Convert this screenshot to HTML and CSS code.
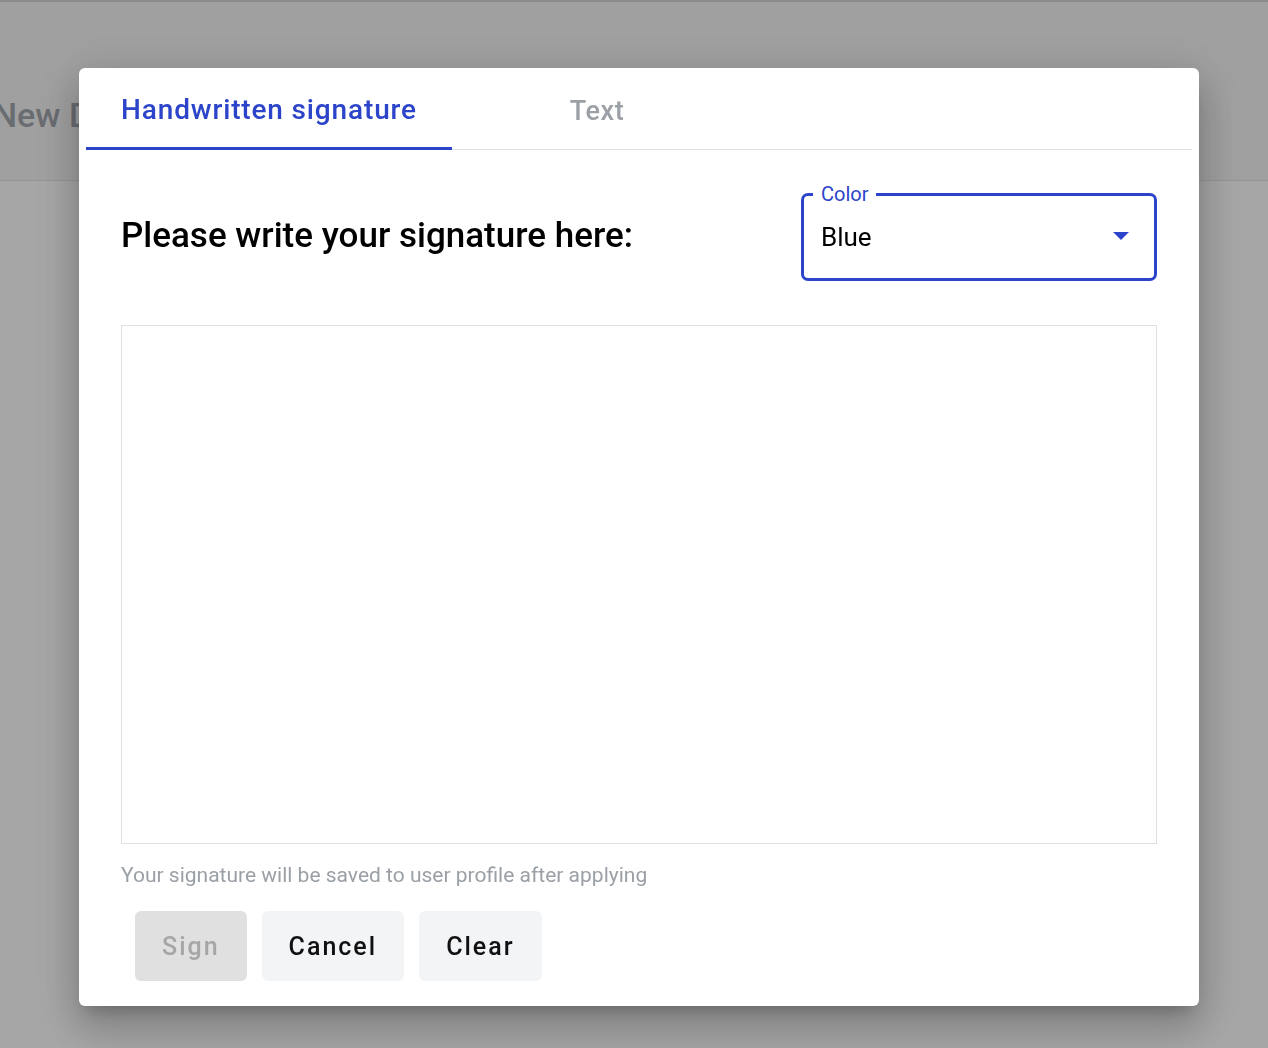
FILE: index.html
```html
<!DOCTYPE html>
<html>
<head>
<meta charset="utf-8">
<link rel="stylesheet" href="styles.css">
</head>
<body>
<div class="page">
  <header class="topbar"><span class="page-title">New Document</span></header>
  <main class="main"></main>
</div>
<div class="overlay"></div>
<div class="dialog">
  <div class="tabs">
    <div class="tab active">Handwritten signature</div>
    <div class="tab">Text</div>
  </div>
  <div class="content">
    <div class="head-row">
      <h2 class="heading">Please write your signature here:</h2>
      <div class="select">
        <span class="select-label">Color</span>
        <span class="select-value">Blue</span>
        <svg class="select-arrow" width="16" height="8" viewBox="0 0 16 8"><path d="M0 0h16L8 8z" fill="#2c44c9"/></svg>
      </div>
    </div>
    <div class="canvas"></div>
    <p class="helper">Your signature will be saved to user profile after applying</p>
    <div class="actions">
      <button class="btn disabled">Sign</button>
      <button class="btn">Cancel</button>
      <button class="btn">Clear</button>
    </div>
  </div>
</div>
</body>
</html>
```

FILE: styles.css
```css
* { box-sizing: border-box; }
html, body { margin: 0; padding: 0; height: 100%; }
body {
  font-family: Roboto, "Noto Sans", Arial, sans-serif;
  background: #fff;
  overflow: hidden;
}
.page { height: 100%; display: flex; flex-direction: column; }
.topbar {
  height: 181px;
  background: #f6f6f6;
  border-top: 2px solid #d4d4d4;
  border-bottom: 1px solid #e6e6e6;
  display: flex;
  align-items: flex-start;
  padding-top: 93px;
}
.page-title {
  font-size: 34px;
  line-height: 40px;
  font-weight: 500;
  color: #a2a6ae;
  margin-left: -7px;
  white-space: nowrap;
}
.main { flex: 1; background: #fff; }
.overlay {
  position: fixed;
  inset: 0;
  background: rgba(0,0,0,0.35);
}
.dialog {
  position: fixed;
  left: 79px;
  top: 68px;
  width: 1120px;
  height: 938px;
  background: #fff;
  border-radius: 6px;
  box-shadow: 0 11px 15px -7px rgba(0,0,0,0.2), 0 24px 38px 3px rgba(0,0,0,0.14), 0 9px 46px 8px rgba(0,0,0,0.12);
  display: flex;
  flex-direction: column;
}
.tabs {
  margin: 0 7px;
  height: 82px;
  border-bottom: 1px solid #e0e0e0;
  display: flex;
}
.tab {
  height: 82px;
  display: flex;
  align-items: center;
  justify-content: center;
  font-size: 28px;
  font-weight: 500;
  letter-spacing: 0.85px;
  color: #9aa0a6;
  padding-top: 3px;
}
.tab:first-child { width: 366px; }
.tab:nth-child(2) { width: 290px; font-size: 27px; letter-spacing: 0.6px; }
.tab.active {
  color: #2c44c9;
  border-bottom: 3px solid #2c44c9;
  padding-top: 4px;
}
.content {
  padding: 0 42px;
  display: flex;
  flex-direction: column;
}
.head-row {
  margin-top: 43px;
  height: 88px;
  display: flex;
  align-items: center;
  justify-content: space-between;
}
.heading {
  margin: 0;
  font-size: 35px;
  font-weight: 500;
  color: #000;
  margin-top: -3px;
}
.select {
  position: relative;
  width: 356px;
  height: 88px;
  border: 3px solid #2c44c9;
  border-radius: 7px;
  display: flex;
  align-items: center;
  padding: 0 25px 0 17px;
  justify-content: space-between;
}
.select-label {
  position: absolute;
  left: 9px;
  top: -14px;
  background: #fff;
  padding: 0 8px;
  font-size: 20px;
  line-height: 24px;
  color: #2c44c9;
}
.select-value {
  font-size: 26px;
  color: #000;
  padding-top: 0;
}
.select-arrow { display: block; margin-top: -2px; }
.canvas {
  margin-top: 44px;
  height: 519px;
  border: 1px solid #e0e0e0;
}
.helper {
  margin: 19px 0 0;
  font-size: 21px;
  line-height: 24px;
  color: #9aa0a6;
}
.actions {
  margin-top: 24px;
  padding-left: 14px;
  display: flex;
  gap: 15px;
}
.btn {
  height: 70px;
  border: none;
  border-radius: 6px;
  background: #f3f4f6;
  font-family: Roboto, "Noto Sans", Arial, sans-serif;
  font-size: 25px;
  font-weight: 500;
  letter-spacing: 2px;
  color: #111;
  padding: 0 27px;
}
.btn.disabled {
  background: #e0e0e0;
  color: #a6a6a6;
}
```
